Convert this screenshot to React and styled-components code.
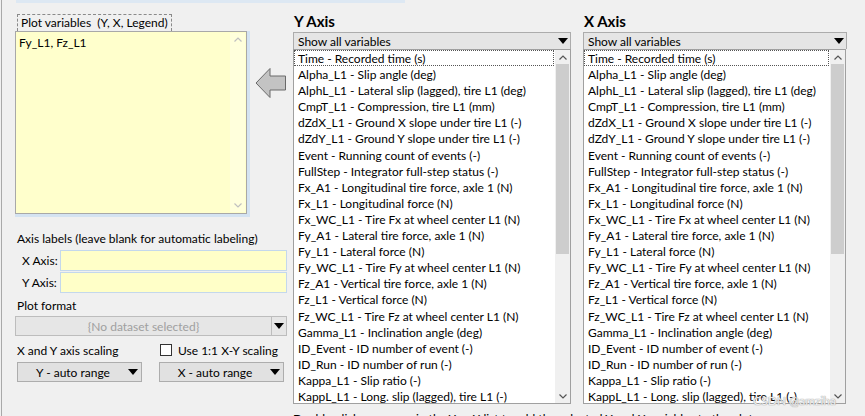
import React from "react";
import styled, { createGlobalStyle } from "styled-components";

const Global = createGlobalStyle`
  html, body { margin: 0; padding: 0; background: #f0f0f0; }
  body { font-family: Lato, "Noto Sans", Arial, sans-serif; font-size: 12px; color: #000; }
  * { box-sizing: border-box; }
`;

const Page = styled.div`
  position: relative;
  width: 865px;
  height: 416px;
  overflow: hidden;
  background: #f0f0f0;
  border-left: 1px solid #a9a9a9;
  margin-left: 1px;
`;

const TopBand = styled.div`
  margin-left: 14px;
  width: 389px;
  height: 3px;
  background: #dde8f3;
`;

const Main = styled.div`
  display: flex;
  padding-left: 13px;
  gap: 6px;
`;

const LeftCol = styled.div`
  width: 272px;
  display: flex;
  flex-direction: column;
  padding-top: 11px;
`;

const GroupLabel = styled.div`
  align-self: flex-start;
  margin-left: 2px;
  padding: 0 3px;
  height: 17px;
  line-height: 15px;
  border: 1px dashed #8a8a8a;
  border-bottom: none;
  white-space: pre;
  font-size: 12px;
`;

const TopRow = styled.div`
  display: flex;
  align-items: flex-start;
`;

const AreaOuter = styled.div`
  width: 237px;
  height: 186px;
  border-right: 3px solid #d4e3f2;
  border-bottom: 3px solid #d4e3f2;
`;

const TextArea = styled.div`
  display: flex;
  width: 100%;
  height: 100%;
  background: #ffffcc;
  border: 1px solid #a8a8a8;
`;

const AreaText = styled.div`
  flex: 1;
  padding: 3px 3px;
  font-size: 12px;
`;

const YScroll = styled.div`
  width: 15px;
  margin: 1px 1px 1px 0;
  background: #ffffdc;
  display: flex;
  flex-direction: column;
  justify-content: space-between;
  align-items: center;
  padding: 4px 0;
`;

const ArrowWrap = styled.div`
  margin-left: 5px;
  margin-top: 36px;
  width: 32px;
  height: 32px;
`;

const SectionTitle = styled.div`
  margin-top: ${(p) => p.$top || 0}px;
  margin-left: 2px;
  font-size: 12px;
  line-height: 16px;
`;

const FieldRow = styled.div`
  display: flex;
  align-items: center;
  height: 22px;
  margin-top: ${(p) => p.$top || 0}px;
`;

const FieldLabel = styled.div`
  width: 45px;
  padding-left: 7px;
  font-size: 12px;
`;

const YellowInput = styled.div`
  flex: 1;
  height: 21px;
  background: #ffffc8;
  border: 1px solid #c4d8ec;
`;

const Disabled = styled.div`
  display: flex;
  align-items: center;
  height: 20px;
  margin-top: 2px;
  background: #e6e6e6;
  border: 1px solid #bdbdbd;
  color: #a0a0a0;
  font-size: 12px;
`;

const DisabledText = styled.div`
  flex: 1;
  text-align: center;
`;

const DropBtn = styled.div`
  width: 15px;
  height: 100%;
  border-left: 1px solid #bdbdbd;
  display: flex;
  align-items: center;
  justify-content: center;
`;

const ScaleRow = styled.div`
  display: flex;
  align-items: center;
  margin-top: 6px;
  height: 16px;
`;

const ScaleLabel = styled.div`
  width: 145px;
  padding-left: 2px;
  font-size: 12px;
`;

const Check = styled.div`
  display: flex;
  align-items: center;
  gap: 6px;
  font-size: 12px;
`;

const Box = styled.span`
  width: 12px;
  height: 12px;
  border: 1px solid #333;
  background: #fff;
`;

const ButtonRow = styled.div`
  display: flex;
  gap: 17px;
  margin-top: 4px;
  padding-left: 2px;
`;

const RangeBtn = styled.div`
  width: 125px;
  height: 20px;
  display: flex;
  align-items: center;
  background: #e1e1e1;
  border: 1px solid #adadad;
  font-size: 12px;
  padding-right: 3px;
`;

const RangeText = styled.div`
  flex: 1;
  text-align: center;
`;

const AxisPanel = styled.div`
  width: ${(p) => p.$w}px;
  display: flex;
  flex-direction: column;
  margin-left: ${(p) => p.$ml || 0}px;
`;

const AxisTitle = styled.div`
  font-weight: bold;
  font-size: 15px;
  height: 29px;
  padding-top: 8px;
  padding-left: 1px;
  line-height: 20px;
`;

const Combo = styled.div`
  display: flex;
  align-items: center;
  height: 17px;
  background: #e5e5e5;
  border: 1px solid #acacac;
  border-bottom: none;
  padding: 0 2px 0 4px;
  font-size: 12px;
  width: ${(p) => p.$w}px;
`;

const ComboText = styled.div`
  flex: 1;
`;

const List = styled.div`
  display: flex;
  height: 355px;
  background: #fff;
  border: 1px solid #a0a0a0;
  width: ${(p) => p.$w}px;
`;

const Items = styled.div`
  flex: 1;
  overflow: hidden;
`;

const Item = styled.div`
  height: 16.1px;
  line-height: 15px;
  padding-left: 3px;
  white-space: nowrap;
  font-size: 12px;
  border: 1px dotted ${(p) => (p.$focus ? "#555" : "transparent")};
  margin-right: 1px;
`;

const ListScroll = styled.div`
  width: 15px;
  display: flex;
  flex-direction: column;
  background: #f0f0f0;
`;

const ScrollBtn = styled.div`
  height: 14px;
  display: flex;
  align-items: center;
  justify-content: center;
`;

const Thumb = styled.div`
  margin: 0 1px;
  height: ${(p) => p.$h}px;
  background: #cdcdcd;
`;

const Spacer = styled.div`
  flex: 1;
`;

const Hint = styled.div`
  margin-top: 7px;
  font-size: 12px;
  white-space: nowrap;
`;

const Watermark = styled.div`
  position: absolute;
  right: 30px;
  bottom: 8px;
  font-size: 12px;
  color: rgba(255, 255, 255, 0.85);
  text-shadow: 0 0 1px #999, 0 0 1px #999;
`;

const Tri = () => (
  <svg width="10" height="6" viewBox="0 0 10 6">
    <polygon points="0,0 10,0 5,6" fill="#000" />
  </svg>
);

const Up = ({ c = "#777" }) => (
  <svg width="8" height="5" viewBox="0 0 8 5">
    <polyline points="0.5,4.5 4,1 7.5,4.5" fill="none" stroke={c} strokeWidth="1.2" />
  </svg>
);

const Down = ({ c = "#777" }) => (
  <svg width="8" height="5" viewBox="0 0 8 5">
    <polyline points="0.5,0.5 4,4 7.5,0.5" fill="none" stroke={c} strokeWidth="1.2" />
  </svg>
);

const vars = [
  "Time - Recorded time (s)",
  "Alpha_L1 - Slip angle (deg)",
  "AlphL_L1 - Lateral slip (lagged), tire L1 (deg)",
  "CmpT_L1 - Compression, tire L1 (mm)",
  "dZdX_L1 - Ground X slope under tire L1 (-)",
  "dZdY_L1 - Ground Y slope under tire L1 (-)",
  "Event - Running count of events (-)",
  "FullStep - Integrator full-step status (-)",
  "Fx_A1 - Longitudinal tire force, axle 1 (N)",
  "Fx_L1 - Longitudinal force (N)",
  "Fx_WC_L1 - Tire Fx at wheel center L1 (N)",
  "Fy_A1 - Lateral tire force, axle 1 (N)",
  "Fy_L1 - Lateral force (N)",
  "Fy_WC_L1 - Tire Fy at wheel center L1 (N)",
  "Fz_A1 - Vertical tire force, axle 1 (N)",
  "Fz_L1 - Vertical force (N)",
  "Fz_WC_L1 - Tire Fz at wheel center L1 (N)",
  "Gamma_L1 - Inclination angle (deg)",
  "ID_Event - ID number of event (-)",
  "ID_Run - ID number of run (-)",
  "Kappa_L1 - Slip ratio (-)",
  "KappL_L1 - Long. slip (lagged), tire L1 (-)",
];

const VarList = ({ w }) => (
  <List $w={w}>
    <Items>
      {vars.map((v, i) => (
        <Item key={v} $focus={i === 0}>
          {v}
        </Item>
      ))}
    </Items>
    <ListScroll>
      <ScrollBtn>
        <Up c="#555" />
      </ScrollBtn>
      <Thumb $h={190} />
      <Spacer />
      <ScrollBtn>
        <Down c="#555" />
      </ScrollBtn>
    </ListScroll>
  </List>
);

export default function App() {
  return (
    <Page>
      <Global />
      <TopBand />
      <Main>
        <LeftCol>
          <GroupLabel>Plot variables  (Y, X, Legend)</GroupLabel>
          <TopRow>
            <AreaOuter>
              <TextArea>
                <AreaText>Fy_L1, Fz_L1</AreaText>
                <YScroll>
                  <Up c="#c0c0c0" />
                  <Down c="#c0c0c0" />
                </YScroll>
              </TextArea>
            </AreaOuter>
            <ArrowWrap>
              <svg width="32" height="32" viewBox="0 0 32 32">
                <polygon
                  points="1,16 15,1.5 15,9 30.5,9 30.5,23 15,23 15,30.5"
                  fill="#c3c3c3"
                  stroke="#6a6a6a"
                  strokeWidth="1"
                />
              </svg>
            </ArrowWrap>
          </TopRow>
          <SectionTitle $top={14}>Axis labels (leave blank for automatic labeling)</SectionTitle>
          <FieldRow $top={2}>
            <FieldLabel>X Axis:</FieldLabel>
            <YellowInput />
          </FieldRow>
          <FieldRow>
            <FieldLabel>Y Axis:</FieldLabel>
            <YellowInput />
          </FieldRow>
          <SectionTitle $top={5}>Plot format</SectionTitle>
          <Disabled>
            <DisabledText>{"{No dataset selected}"}</DisabledText>
            <DropBtn>
              <Tri />
            </DropBtn>
          </Disabled>
          <ScaleRow>
            <ScaleLabel>X and Y axis scaling</ScaleLabel>
            <Check>
              <Box />
              Use 1:1 X-Y scaling
            </Check>
          </ScaleRow>
          <ButtonRow>
            <RangeBtn>
              <RangeText>Y - auto range</RangeText>
              <Tri />
            </RangeBtn>
            <RangeBtn>
              <RangeText>X - auto range</RangeText>
              <Tri />
            </RangeBtn>
          </ButtonRow>
        </LeftCol>
        <AxisPanel $w={278}>
          <AxisTitle>Y Axis</AxisTitle>
          <Combo $w={278}>
            <ComboText>Show all variables</ComboText>
            <Tri />
          </Combo>
          <VarList w={278} />
          <Hint>Double-click on names in the Y or X list to add the selected Y and X variables to the plot</Hint>
        </AxisPanel>
        <AxisPanel $w={264} $ml={6}>
          <AxisTitle>X Axis</AxisTitle>
          <Combo $w={264}>
            <ComboText>Show all variables</ComboText>
            <Tri />
          </Combo>
          <VarList w={263} />
        </AxisPanel>
      </Main>
      <Watermark>CSDN @amziha</Watermark>
    </Page>
  );
}
